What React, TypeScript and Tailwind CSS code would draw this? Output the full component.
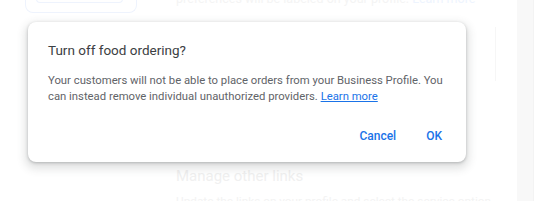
import React from "react";

export default function App() {
  return (
    <div className="relative w-[534px] h-[201px] overflow-hidden bg-white" style={{ fontFamily: "Roboto, 'Liberation Sans', sans-serif" }}>
      {/* faded background page */}
      <div className="flex h-full">
        <div className="flex-1 flex">
          <div className="w-[176px] shrink-0 pl-[25px]">
            <div className="w-[112px] h-[14px] -mt-[1px] border border-[#eef3fd] rounded-b-[8px] border-t-0 px-[10px]">
              <div className="w-[87px] h-[4px] border border-t-0 border-[#eef3fd] rounded-b-[6px]" />
            </div>
          </div>
          <div className="flex-1 flex flex-col">
            <div className="-mt-[9px] text-[12.5px] leading-[16px] text-[#f4f4f4] whitespace-nowrap">
              preferences will be labeled on your profile. <span className="text-[#eef4fe]">Learn more</span>
            </div>
            <div className="flex mt-[20px]">
              <div className="flex-1" />
              <div className="w-[1px] h-[54px] bg-[#f6f6f6] mr-[21px]" />
            </div>
            <div className="mt-[67px] h-[1px] bg-[#efefef] mr-[22px] ml-[-6px]" />
            <div className="mt-[18px] text-[15px] leading-[20px] text-[#f0f0f0] whitespace-nowrap">Manage other links</div>
            <div className="mt-[7px] text-[11.8px] leading-[16px] text-[#f3f3f3] whitespace-nowrap">Update the links on your profile and select the service option</div>
          </div>
        </div>
        <div className="w-[17px] bg-[#f8f8f8] border-r border-[#f3f3f3]" />
      </div>

      {/* dialog */}
      <div className="absolute left-[28px] top-[22px] w-[438px] h-[140px] bg-white rounded-[8px] shadow-[0_1px_3px_rgba(60,64,67,0.3),0_4px_8px_3px_rgba(60,64,67,0.15)] pl-[20px] pr-[18px] pt-[18px]">
        <div className="text-[13.5px] leading-[20px] text-[#3c4043]">Turn off food ordering?</div>
        <div className="mt-[13px] text-[11.3px] leading-[16px] text-[#5f6368]">
          Your customers will not be able to place orders from your Business Profile. You can instead remove individual unauthorized providers.{" "}
          <span className="text-[#1a73e8] underline">Learn more</span>
        </div>
        <div className="flex justify-end gap-[30px] mt-[23px] pr-[6px] text-[12px] leading-[16px] font-medium text-[#1a73e8]">
          <span>Cancel</span>
          <span>OK</span>
        </div>
      </div>
    </div>
  );
}
